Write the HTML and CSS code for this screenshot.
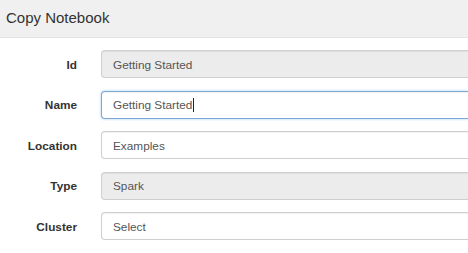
FILE: index.html
```html
<!DOCTYPE html>
<html>
<head>
<meta charset="utf-8">
<link rel="stylesheet" href="styles.css">
</head>
<body>
<div class="modal">
  <div class="header"><h4 class="title">Copy Notebook</h4></div>
  <form class="body">
    <div class="row">
      <label class="label">Id</label>
      <div class="field readonly">Getting Started</div>
    </div>
    <div class="row">
      <label class="label">Name</label>
      <div class="field focus">Getting Started<span class="caret"></span></div>
    </div>
    <div class="row">
      <label class="label">Location</label>
      <div class="field">Examples</div>
    </div>
    <div class="row">
      <label class="label">Type</label>
      <div class="field readonly">Spark</div>
    </div>
    <div class="row">
      <label class="label">Cluster</label>
      <div class="field">Select</div>
    </div>
  </form>
</div>
</body>
</html>
```
FILE: styles.css
```css
html, body {
  margin: 0;
  padding: 0;
  background: #fff;
}
body {
  font-family: "Liberation Sans", Arial, sans-serif;
  width: 468px;
  height: 253px;
  overflow: hidden;
}
.modal {
  width: 468px;
}
.header {
  height: 37px;
  background: #f0f0f0;
  border-bottom: 1px solid #e3e3e3;
  display: flex;
  align-items: center;
  padding-left: 6px;
}
.title {
  margin: 0;
  font-size: 15px;
  font-weight: normal;
  color: #333;
  line-height: 18px;
  padding-bottom: 1px;
}
.body {
  padding-top: 12px;
  display: flex;
  flex-direction: column;
  gap: 12.5px;
  margin: 0;
}
.row {
  display: flex;
  align-items: center;
  height: 28px;
}
.label {
  flex: none;
  width: 77px;
  text-align: right;
  font-size: 11.8px;
  font-weight: bold;
  color: #333;
  padding-right: 24px;
  padding-top: 1px;
  box-sizing: content-box;
}
.field {
  flex: 1;
  box-sizing: border-box;
  height: 28px;
  border: 1px solid #cfcfcf;
  border-right: none;
  border-radius: 4px 0 0 4px;
  padding: 1px 11px 0;
  font-size: 11.8px;
  color: #555;
  display: flex;
  align-items: center;
  background: #fff;
  box-shadow: inset 0 1px 1px rgba(0,0,0,0.06);
}
.readonly {
  background: #ececec;
}
.focus {
  border-color: #7fa8d4;
  box-shadow: inset 0 1px 1px rgba(0,0,0,0.06), 0 0 3px rgba(102,175,233,0.6);
}
.caret {
  display: inline-block;
  width: 1px;
  height: 14px;
  background: #222;
  margin-left: 1px;
}
```
